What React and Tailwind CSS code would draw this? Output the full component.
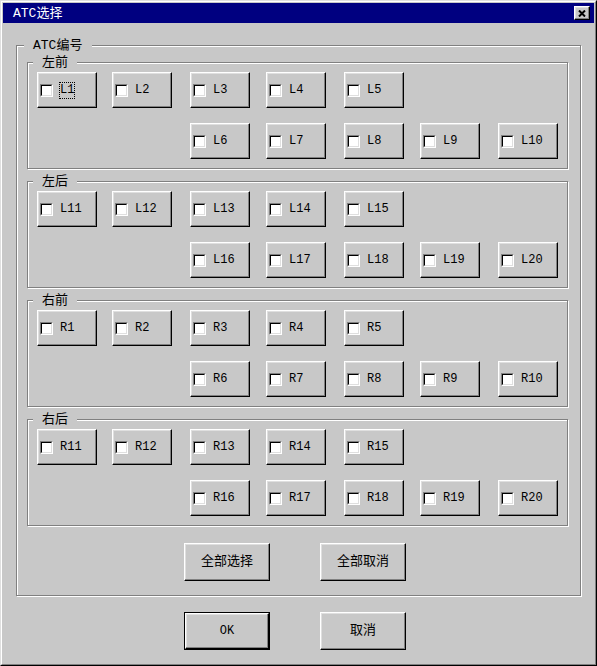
const bevel =
  "border border-t-white border-l-white border-r-black border-b-black shadow-[inset_-1px_-1px_0_#808080,inset_1px_1px_0_#dfdfdf]";

const sections = [
  { title: "左前", prefix: "L", start: 1 },
  { title: "左后", prefix: "L", start: 11 },
  { title: "右前", prefix: "R", start: 1 },
  { title: "右后", prefix: "R", start: 11 },
];

function Check() {
  return (
    <span className="w-[13px] h-[13px] shrink-0 border border-t-[#808080] border-l-[#808080] border-b-white border-r-white">
      <span className="block w-full h-full bg-white border border-t-black border-l-black border-b-[#dfdfdf] border-r-[#dfdfdf]" />
    </span>
  );
}

function CheckButton({ label, focused, className = "" }) {
  return (
    <div className={`w-[60px] h-[36px] flex items-center pl-[2px] gap-[6px] ${bevel} ${className}`}>
      <Check />
      <span
        className={`border px-0 leading-[15px] text-[12px] ${
          focused ? "border-dotted border-black" : "border-transparent"
        }`}
      >
        {label}
      </span>
    </div>
  );
}

function Group({ title, prefix, start }) {
  const names = Array.from({ length: 10 }, (_, i) => `${prefix}${start + i}`);
  return (
    <fieldset className="ml-[10px] w-[541px] border border-[#808080] shadow-[1px_1px_0_#fff,inset_1px_1px_0_#fff] pb-[9px]">
      <legend className="ml-[5px] px-[9px] leading-[15px] text-[13px] bg-[#c8c8c8]">{title}</legend>
      <div className="pt-[2px] pl-[9px] grid grid-cols-[75px_78px_76px_78px_76px_78px_60px] gap-y-[15px]">
        {names.slice(0, 5).map((n) => (
          <CheckButton key={n} label={n} focused={n === "L1"} />
        ))}
        {names.slice(5).map((n, i) => (
          <CheckButton key={n} label={n} className={i === 0 ? "col-start-3" : ""} />
        ))}
      </div>
    </fieldset>
  );
}

function Button({ children, isDefault }) {
  if (isDefault) {
    return (
      <div className="w-[86px] h-[38px] border border-black">
        <div className={`w-full h-full flex items-center justify-center text-[12px] ${bevel}`}>{children}</div>
      </div>
    );
  }
  return (
    <div className={`w-[86px] h-[38px] flex items-center justify-center text-[13px] ${bevel}`}>{children}</div>
  );
}

export default function App() {
  return (
    <div className="w-[597px] h-[666px] border border-t-[#dfdfdf] border-l-[#dfdfdf] border-r-black border-b-black font-['Liberation_Mono','Noto_Sans_CJK_SC',monospace] text-black">
      <div className="h-full flex flex-col p-px bg-[#c8c8c8] border border-t-white border-l-white border-r-[#808080] border-b-[#808080]">
        <div className="h-[20px] shrink-0 bg-[#000080] flex items-center justify-between pl-[10px] pr-[4px]">
          <span className="text-white text-[13px] leading-[15px]">ATC选择</span>
          <div className={`w-[16px] h-[14px] flex items-center justify-center bg-[#c8c8c8] ${bevel}`}>
            <svg width="8" height="7" viewBox="0 0 8 7" className="block">
              <path d="M1 0.5L7 6.5M7 0.5L1 6.5" stroke="#000" strokeWidth="2" fill="none" />
            </svg>
          </div>
        </div>
        <div className="flex-1 flex flex-col">
          <fieldset className="mt-[15px] ml-[13px] w-[565px] border border-[#808080] shadow-[1px_1px_0_#fff,inset_1px_1px_0_#fff] pb-[14px]">
            <legend className="ml-[7px] pl-[9px] pr-[10px] leading-[15px] text-[13px] bg-[#c8c8c8]">ATC编号</legend>
            <div className="pt-[2px] flex flex-col gap-[5px]">
              {sections.map((s) => (
                <Group key={s.title} {...s} />
              ))}
            </div>
            <div className="mt-[17px] ml-[167px] flex gap-[50px]">
              <Button>全部选择</Button>
              <Button>全部取消</Button>
            </div>
          </fieldset>
          <div className="mt-[16px] ml-[181px] flex gap-[50px]">
            <Button isDefault>OK</Button>
            <Button>取消</Button>
          </div>
        </div>
      </div>
    </div>
  );
}
